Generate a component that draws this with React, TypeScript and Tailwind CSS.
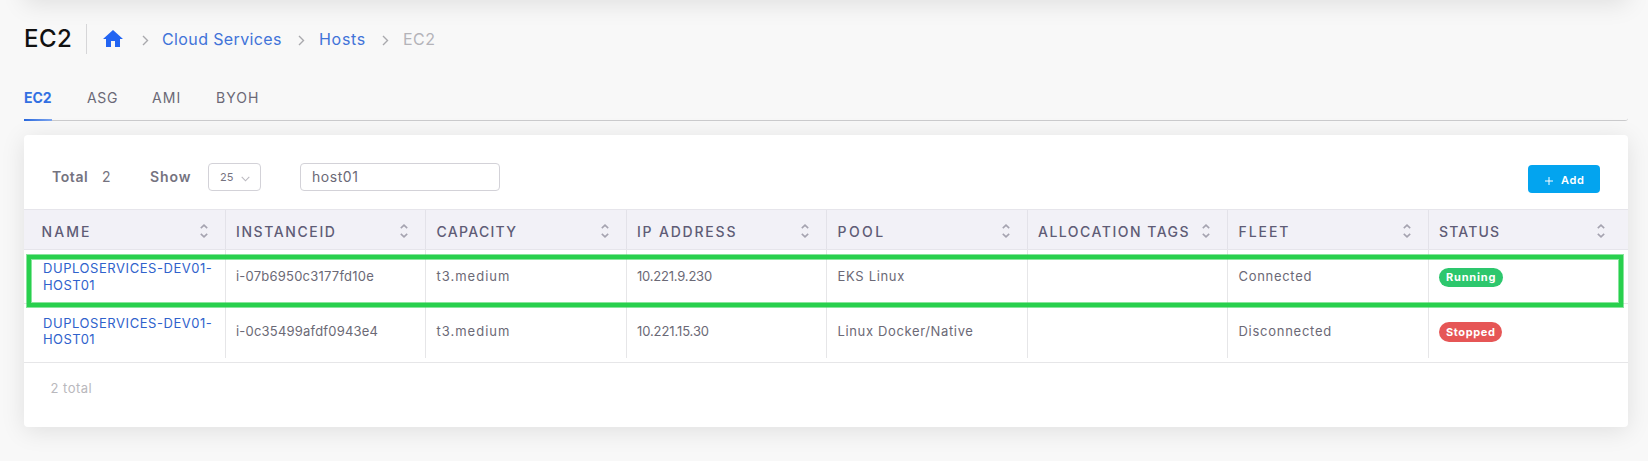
import type { ReactNode } from "react";

const COLUMNS = [
  { title: "NAME", className: "tracking-[2.1px]" },
  { title: "INSTANCEID", className: "tracking-[1.6px]" },
  { title: "CAPACITY", className: "tracking-[1.3px]" },
  { title: "IP ADDRESS", className: "tracking-[1.8px]" },
  { title: "POOL", className: "tracking-[2.4px]" },
  { title: "ALLOCATION TAGS", className: "tracking-[1.5px]" },
  { title: "FLEET", className: "tracking-[1.95px]" },
  { title: "STATUS", className: "tracking-[1.15px]" },
];

function Chevron({ className }: { className: string }) {
  return (
    <svg className={`h-[11px] w-[7px] shrink-0 ${className}`} viewBox="0 0 7 11" fill="none" stroke="#a9a9ad" strokeWidth="1.4">
      <path d="M1 1l4.5 4.5L1 10" />
    </svg>
  );
}

function SortIcon() {
  return (
    <svg className="mb-[2px] h-[14px] w-2 shrink-0" viewBox="0 0 8 14" fill="none" stroke="#a5a3b0" strokeWidth="1.6">
      <path d="M.8 4.2L4 1.2l3.2 3M.8 9.8l3.2 3 3.2-3" />
    </svg>
  );
}

function HeaderCell({ title, className, first, last }: { title: string; className: string; first: boolean; last: boolean }) {
  return (
    <div
      className={`flex items-center justify-between border-[#e3e2e9] pt-1 ${first ? "pl-[17.5px]" : "border-l pl-[10.5px]"} ${last ? "pr-[23.5px]" : "pr-[17px]"}`}
    >
      <span className={`pt-px whitespace-nowrap text-[14px] leading-5 font-medium text-[#5f5c76] ${className}`}>{title}</span>
      <SortIcon />
    </div>
  );
}

function Cell({ children, className = "" }: { children?: ReactNode; className?: string }) {
  return (
    <div className={`flex items-center border-l border-[#e6e6e8] pl-[10.5px] text-[13px] whitespace-nowrap text-[#6b6976] ${className}`}>
      {children}
    </div>
  );
}

function NameCell({ className }: { className: string }) {
  return (
    <div className={`flex flex-col pl-[19px] text-[13px] font-normal text-[#2f62cc] ${className}`}>
      <a className="tracking-[0.56px] whitespace-nowrap">DUPLOSERVICES-DEV01-</a>
      <a className="tracking-[0.45px]">HOST01</a>
    </div>
  );
}

export default function App() {
  return (
    <div className="relative h-[461px] w-[1648px] overflow-hidden bg-[#f8f8f8] pt-6 pr-5 pl-6 font-[Inter,sans-serif]">
      <div className="absolute -top-20 left-6 h-20 w-[1604px] rounded shadow-[0_4px_24px_rgba(0,0,0,0.1)]" />

      <header className="flex h-[30px] items-center">
        <h1 className="w-[62px] text-[24px] font-medium tracking-[0.46px] text-[#111]">EC2</h1>
        <span className="h-[30px] w-px bg-[#d6d6d8]" />
        <svg className="ml-[14px] h-6 w-6 shrink-0" viewBox="0 0 24 24" fill="#2264f2">
          <path d="M10 20v-6h4v6h5v-8h3L12 3 2 12h3v8z" />
        </svg>
        <Chevron className="mt-[2px] ml-[17px]" />
        <a className="ml-[13px] w-[121px] text-[16px] tracking-[0.38px] whitespace-nowrap text-[#4173d8]">Cloud Services</a>
        <Chevron className="mt-[2px] ml-[15px]" />
        <a className="ml-[14px] w-[45px] text-[16px] tracking-[0.7px] whitespace-nowrap text-[#4173d8]">Hosts</a>
        <Chevron className="mt-[2px] ml-[18px]" />
        <span className="ml-[14px] text-[16px] tracking-[0.5px] text-[#b4b3b8]">EC2</span>
      </header>

      <nav className="mt-[33px] flex h-[34px] gap-[35px] rounded-br-[3px] border-b border-[#cbcbcd] text-[14px] leading-[22px] text-[#6b6976]">
        <div className="relative w-7 font-bold tracking-[-0.05px] text-[#3370e2]">
          EC2
          <span className="absolute -bottom-px left-0 h-[2px] w-7 bg-linear-to-r from-[#2766dc] to-[#7da5ee]" />
        </div>
        <div className="w-[30px] tracking-[0.65px]">ASG</div>
        <div className="w-[29px] tracking-[1.1px]">AMI</div>
        <div className="tracking-[1px]">BYOH</div>
      </nav>

      <main className="mt-[14px] h-[292px] rounded-[4px] bg-white shadow-[0_4px_24px_rgba(0,0,0,0.1)]">
        <div className="flex h-[74px] items-start pt-7 pr-7 pl-7 text-[14px] leading-7 text-[#75737f]">
          <span className="w-[50px] font-semibold tracking-[0.6px]">Total</span>
          <span className="w-12">2</span>
          <span className="w-[58px] font-semibold tracking-[0.9px]">Show</span>
          <div className="flex h-7 w-[53px] items-center rounded-[4px] border border-[#d3d2d8] pl-[11px] text-[11px]">
            <span className="w-[21px]">25</span>
            <svg className="mt-1 h-[6px] w-[9px]" viewBox="0 0 9 6" fill="none" stroke="#bbb9c0" strokeWidth="1.1">
              <path d="M.7.8l3.8 4 3.8-4" />
            </svg>
          </div>
          <div className="ml-[39px] flex h-7 w-[200px] items-center rounded-[4px] border border-[#d3d2d8] pl-[11px] tracking-[0.55px] text-[#6b6976]">
            host01
          </div>
          <button className="mt-[2px] ml-auto flex h-7 w-[72px] items-center rounded-[4px] bg-[#03a4ef] pt-[2px] pl-[17px] text-[11px] font-semibold tracking-[0.65px] text-white">
            <svg className="mt-px mr-[8px] h-[8px] w-[8px]" viewBox="0 0 8 8" stroke="#fff" strokeWidth="1">
              <path d="M4 0v8M0 4h8" />
            </svg>
            Add
          </button>
        </div>

        <div className="relative">
          <div className="grid h-[41px] grid-cols-8 border-y border-[#e6e5eb] bg-[#f2f1f7]">
            {COLUMNS.map((c, i) => (
              <HeaderCell key={c.title} {...c} first={i === 0} last={i === COLUMNS.length - 1} />
            ))}
          </div>
          <div className="grid h-[54px] grid-cols-8 border-b border-[#e6e6e8]">
            <NameCell className="pt-[10px] leading-[17px]" />
            <Cell className="tracking-[0.22px]">i-07b6950c3177fd10e</Cell>
            <Cell className="tracking-[1px]">t3.medium</Cell>
            <Cell className="tracking-[-0.2px]">10.221.9.230</Cell>
            <Cell className="tracking-[0.68px]">EKS Linux</Cell>
            <Cell />
            <Cell className="tracking-[0.7px]">Connected</Cell>
            <Cell>
              <span className="mt-[2px] h-[19px] w-16 rounded-full bg-[#2dc76d] pl-[7px] text-[11px] leading-[19px] font-bold tracking-[0.8px] text-white">
                Running
              </span>
            </Cell>
          </div>
          <div className="border-b border-[#e6e6e8] pb-[4px]">
            <div className="grid h-[54px] grid-cols-8">
              <NameCell className="pt-[11px] leading-4" />
              <Cell className="pt-[2px] tracking-[0.2px]">i-0c35499afdf0943e4</Cell>
              <Cell className="pt-[2px] tracking-[1px]">t3.medium</Cell>
              <Cell className="pt-[2px] tracking-[-0.1px]">10.221.15.30</Cell>
              <Cell className="pt-[2px] tracking-[0.64px]">Linux Docker/Native</Cell>
              <Cell />
              <Cell className="pt-[2px] tracking-[0.73px]">Disconnected</Cell>
              <Cell>
                <span className="mt-[2px] h-5 w-[63px] rounded-full bg-[#e65656] pl-[7px] text-[11px] leading-5 font-bold tracking-[0.62px] text-white">
                  Stopped
                </span>
              </Cell>
            </div>
          </div>
          <div className="absolute top-[46px] left-[3px] h-[52px] w-[1596px] border-4 border-[#28d04d] shadow-[0_0_0_1px_rgba(40,208,77,0.55),inset_0_0_0_1px_rgba(40,208,77,0.55)]" />
        </div>

        <p className="pt-[15px] pl-[26.5px] text-[13px] leading-5 tracking-[0.48px] text-[#b9b8bd]">2 total</p>
      </main>
    </div>
  );
}
